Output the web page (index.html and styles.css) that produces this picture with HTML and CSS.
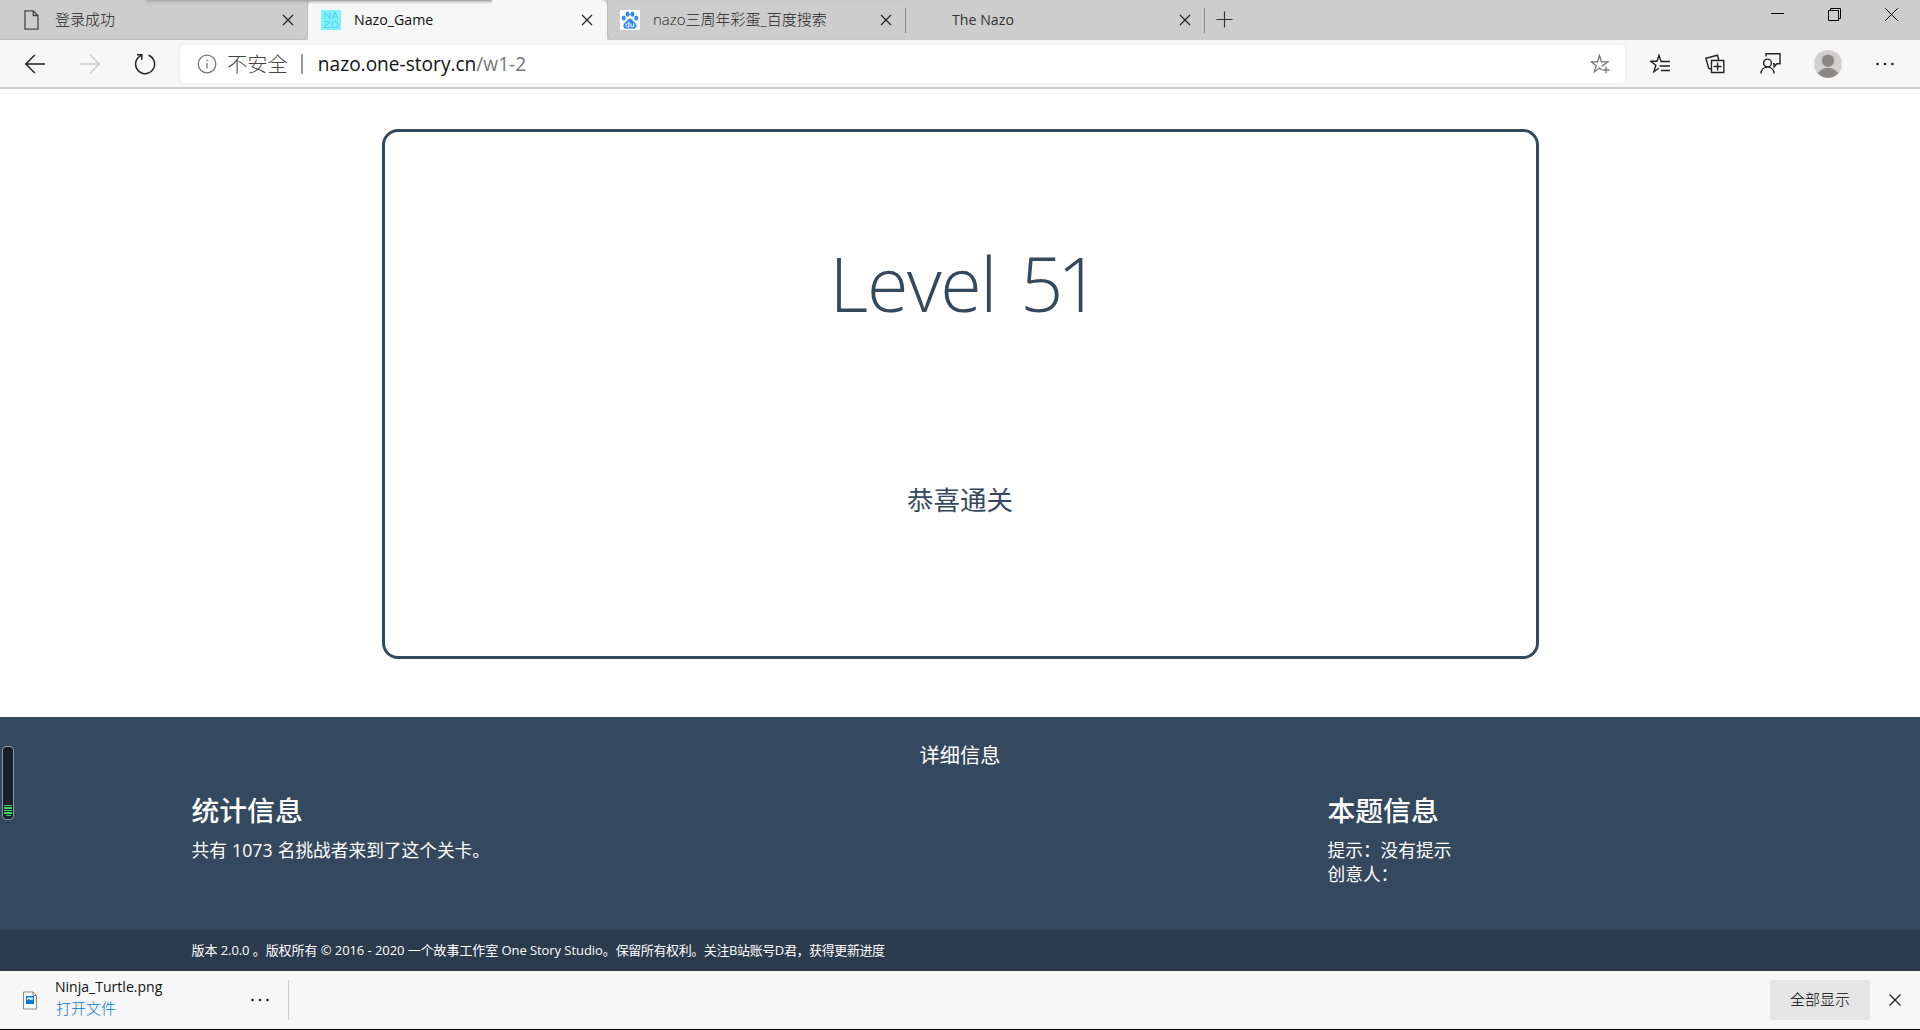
FILE: index.html
```html
<!DOCTYPE html>
<html lang="zh-CN">
<head>
<meta charset="utf-8">
<title>Nazo_Game</title>
<link rel="stylesheet" href="styles.css">
</head>
<body>
<div class="window">
  <header class="tabstrip">
    <div class="tab tab-first">
      <svg class="favicon" viewBox="0 0 20 20"><path d="M3 .8h8.300L16 5.500V19.200H3zM11.300 .8v4.700H16" fill="none" stroke="#444" stroke-width="1.300"/></svg>
      <span class="tab-title">登录成功</span>
      <svg class="close" viewBox="0 0 12 12"><path d="M1 1l10 10M11 1L1 11"/></svg>
    </div>
    <div class="tab tab-active">
      <svg class="favicon" viewBox="0 0 20 20"><path fill="#7ff3fb" d="M0 0h20v20H0z"/><path d="M3.500 9V2.500l5.500 6V2.500M11 9l3-6.500 3 6.500M12 7h4M3 11.500h6L3 17.500h6.500" fill="none" stroke="#5ed3f0" stroke-width="1.200"/><circle cx="14" cy="14.500" r="3" fill="none" stroke="#5ed3f0" stroke-width="1.200"/></svg>
      <span class="tab-title latin-title">Nazo_Game</span>
      <svg class="close" viewBox="0 0 12 12"><path d="M1 1l10 10M11 1L1 11"/></svg>
    </div>
    <div class="tab tab-search">
      <svg class="favicon" viewBox="0 0 20 20"><path fill="#fff" d="M0 0h20v20H0z"/><g fill="#3388ff"><ellipse cx="3.700" cy="8" rx="2" ry="2.600"/><ellipse cx="7.600" cy="4.200" rx="2" ry="2.700"/><ellipse cx="12.400" cy="4.200" rx="2" ry="2.700"/><ellipse cx="16.300" cy="8" rx="2" ry="2.600"/><path d="M10 8.500c2 0 3 2.500 4.800 4 3.200 2.800 1.700 6.300-1.300 6.300-1.500 0-2-.3-3.500-.3s-2 .3-3.500.3c-3 0-4.500-3.500-1.300-6.300C7 11 8 8.500 10 8.500z"/></g><path d="M9 11.500v5.500H7.400a1.500 1.500 0 0 1 0-3.200H9M11 13.600v2.300c0 1.500 2.600 1.500 2.600 0v-2.300V17" fill="none" stroke="#fff" stroke-width="1"/></svg>
      <span class="tab-title">nazo三周年彩蛋_百度搜索</span>
      <svg class="close" viewBox="0 0 12 12"><path d="M1 1l10 10M11 1L1 11"/></svg>
    </div>
    <div class="tab tab-last">
      <span class="tab-title latin-title">The Nazo</span>
      <svg class="close" viewBox="0 0 12 12"><path d="M1 1l10 10M11 1L1 11"/></svg>
    </div>
    <svg class="new-tab" viewBox="0 0 18 18"><path d="M9 .5v17M.5 9h17"/></svg>
    <div class="window-buttons">
      <svg width="13" height="13" viewBox="0 0 13 13"><path d="M0 5.500h13"/></svg>
      <svg width="13" height="13" viewBox="0 0 13 13"><path d="M.5 2.500h10v10H.5zM2.500 2.500v-2h10v10h-2"/></svg>
      <svg width="13" height="13" viewBox="0 0 13 13"><path d="M.3 .3l12.400 12.400M12.700 .3L.3 12.700"/></svg>
    </div>
    <div class="top-shadow"></div>
  </header>

  <nav class="toolbar">
    <svg class="nav-icon back" viewBox="0 0 20 20"><path d="M20 10H.8M9.800 1L.8 10l9 9"/></svg>
    <svg class="nav-icon forward" viewBox="0 0 20 20"><path d="M0 10h19.200M10.200 1l9 9-9 9"/></svg>
    <svg class="nav-icon reload" viewBox="0 0 22 22"><path d="M14.500 2.300A9.500 9.500 0 1 1 7 2.600M3 1.800h4.800v5"/></svg>
    <div class="address">
      <svg class="info" viewBox="0 0 20 20"><circle cx="10" cy="10" r="8.800"/><path d="M10 9v5.500M10 5.500v1.700"/></svg>
      <span class="insecure">不安全</span>
      <span class="divider"></span>
      <span class="url">nazo.one-story.cn<span class="path">/w1-2</span></span>
      <svg class="star" viewBox="0 0 20 20"><path d="M12.500 12.500l-.3-.5 5.800-4.200h-6.500L9.500 1.500l-2 6.300H1l5.300 3.900-2 6.200 5.200-3.800 2.200 1.600M16 12.500v7M12.500 16h7"/></svg>
    </div>
    <div class="actions">
      <svg width="20" height="20" viewBox="0 0 20 20"><path d="M11.500 7.500H11L9 1.300 7 7.300H.9l4.900 3.900-1.900 6.500 4.800-3.400M11 7.500h9M9.500 12h10.500M11 16.500h9"/></svg>
      <svg width="20" height="20" viewBox="0 0 20 20"><path d="M6.500 6.500h12.300v12H6.500zM12.600 8.500v8M8.600 12.500h8M6.300 15.200l-2.500-.8L.8 4.200l11.700-3 1.200 5"/></svg>
      <svg width="21" height="21" viewBox="0 0 21 21"><circle cx="7.500" cy="10" r="3.900"/><path d="M1 20.500c0-8.500 13-8.500 13 0M6 3.500V.8h14v10h-3.200l-2.600 3v-3H13"/></svg>
      <svg class="avatar" width="28" height="28" viewBox="0 0 28 28"><circle cx="14" cy="14" r="14" fill="#d2d0ce"/><circle cx="14" cy="10.700" r="6.200" fill="#8a8886"/><path d="M4 23.500c3-7.500 17-7.500 20 0a14 14 0 0 1-20 0z" fill="#8a8886"/></svg>
      <svg class="dots" width="18" height="4" viewBox="0 0 18 4"><circle cx="1.600" cy="2" r="1.300"/><circle cx="9" cy="2" r="1.300"/><circle cx="16.400" cy="2" r="1.300"/></svg>
    </div>
  </nav>

  <main class="stage">
    <section class="level-card">
      <h1>Level <span class="level-number">51</span></h1>
      <p>恭喜通关</p>
    </section>
  </main>

  <footer class="details">
    <h2>详细信息</h2>
    <div class="columns">
      <section class="stats">
        <h3>统计信息</h3>
        <p>共有 <span class="count">1073</span> 名挑战者来到了这个关卡。</p>
      </section>
      <section class="question">
        <h3>本题信息</h3>
        <p>提示：没有提示</p>
        <p>创意人：</p>
      </section>
    </div>
    <div class="meter"><i></i><i></i><i></i><i></i><i></i></div>
  </footer>
  <div class="copyright"><span class="version">版本 2.0.0 。版权所有 © 2016 - 2020 一个故事工作室 One Story Studio。</span><span class="rights">保留所有权利。关注B站账号D君，获得更新进度</span></div>

  <div class="downloads">
    <svg class="file" width="16" height="19" viewBox="0 0 16 19"><path d="M1.500 1h9.500l3.500 3.500V18h-13z" fill="#fff" stroke="#8a8886"/><path d="M11 1v3.500h3.500" fill="none" stroke="#8a8886"/><path d="M4 5h8v8H4z" fill="#0078d4"/><path d="M5.200 6.500h5.600v3.200l-1-1.400-1 1-1.800-1.500-1.800 1.400z" fill="#fff"/></svg>
    <div class="file-text">
      <span class="file-name">Ninja_Turtle.png</span>
      <span class="open-file">打开文件</span>
    </div>
    <svg class="dots" width="18" height="4" viewBox="0 0 18 4"><circle cx="1.600" cy="2" r="1.300"/><circle cx="9" cy="2" r="1.300"/><circle cx="16.400" cy="2" r="1.300"/></svg>
    <span class="bar-line"></span>
    <span class="show-all">全部显示</span>
    <svg class="close" viewBox="0 0 12 12"><path d="M.5 .5l11 11M11.500 .5L.5 11.500"/></svg>
  </div>
</div>
</body>
</html>
```
FILE: styles.css
```css
* { box-sizing: border-box; }
body { margin: 0; font-family: "Open Sans", "Noto Sans CJK SC", sans-serif; color: #222; overflow: hidden; }
h1, h2, h3, p { margin: 0; font-weight: 400; }
svg { display: block; flex: none; }
.window { display: flex; flex-direction: column; width: 1920px; height: 1030px; background: #fff; border-bottom: 1px solid #000; }

.tabstrip { position: relative; display: flex; height: 40px; background: #cdcdcd; }
.tab { display: flex; align-items: center; width: 299px; height: 40px; padding: 0 14px 0 13px; font-size: 15px; color: #222; white-space: nowrap; }
.tab-first { width: 308px; padding-left: 22px; border-radius: 0 0 6px 0; box-shadow: inset -1px -1px 1px #bbb; }
.tab-active { background: #f7f7f7; border-radius: 6px 6px 0 0; color: #111; }
.tab-search { border-radius: 0 0 0 6px; box-shadow: inset 1px 0 1px #bbb; }
.tab-search::after, .tab-last::after { content: ""; align-self: center; width: 1px; height: 25px; margin: 0 -14px 0 13px; background: #888; }
.tab-last { padding-left: 46px; }
.favicon { width: 20px; height: 20px; margin-right: 13px; }
.tab-title { flex: 1; padding-bottom: 2px; line-height: 20px; font-weight: 300; }
.tab-title.latin-title { padding-bottom: 0; font-weight: 400; font-size: 14.200px; }
.tab-last .latin-title { color: #333; }
.close { width: 12px; height: 12px; fill: none; stroke: #222; stroke-width: 1.200; }
.new-tab { width: 17px; height: 17px; margin: 11px 0 0 11px; fill: none; stroke: #333; stroke-width: 1.200; }
.window-buttons { display: flex; gap: 44px; margin: 8px 22px 0 auto; fill: none; stroke: #000; stroke-width: 1; }
.top-shadow { position: absolute; left: 147px; top: 0; width: 344px; height: 1px; background: #aaa; box-shadow: 0 0 3px 1px #aaa; }

.toolbar { display: flex; align-items: center; height: 49px; padding-left: 25px; background: #f7f7f7; border-bottom: 2px solid #cecece; }
.nav-icon { width: 20px; height: 20px; fill: none; stroke: #222; stroke-width: 1.500; }
.forward { margin-left: 35px; stroke: #ccc; }
.reload { width: 22px; height: 22px; margin-left: 34px; }
.address { display: flex; align-items: center; width: 1445px; height: 38px; margin-left: 24px; padding: 0 15px 0 17px; background: #fff; border-radius: 5px; box-shadow: 0 0 3px #e4e4e4; font-size: 19.100px; line-height: 36px; }
.info { width: 20px; height: 20px; fill: none; stroke: #777; stroke-width: 1.300; }
.insecure { margin-left: 10px; font-size: 20.300px; font-weight: 300; color: #444; }
.divider { width: 2px; height: 20px; margin: 0 15px 0 13px; background: #999; }
.url { flex: 1; color: #111; }
.path { color: #777; }
.star { width: 20px; height: 20px; fill: none; stroke: #777; stroke-width: 1.300; }
.actions { display: flex; align-items: center; margin-left: 25px; fill: none; stroke: #222; stroke-width: 1.400; }
.actions svg + svg { margin-left: 35px; }
.actions svg + .avatar { margin-left: 33px; stroke: none; }
.actions svg + .dots { margin-left: 34px; }
.dots { fill: #222; stroke: none; }

.stage { display: flex; justify-content: center; height: 628px; padding-top: 40px; background: #fff; }
.level-card { display: flex; flex-direction: column; align-items: center; width: 1157px; height: 530px; border: 3px solid #34495e; border-radius: 16px; color: #34495e; }
.level-card h1 { margin-top: 95px; padding-left: 4px; font-size: 75.500px; line-height: 112px; font-weight: 300; letter-spacing: -1.400px; word-spacing: 6px; }
.level-number { letter-spacing: -6px; }
.level-card p { margin-top: 141px; font-size: 26.500px; line-height: 40px; }

.details { position: relative; height: 213px; background: #34495e; color: #fff; }
.details h2 { padding-top: 23px; font-size: 20.200px; line-height: 30px; text-align: center; }
.columns { display: grid; grid-template-columns: 1136px 1fr; padding: 18px 0 0 191.500px; }
.columns h3 { font-size: 27.800px; line-height: 44px; font-weight: 500; }
.columns p { font-size: 17.700px; line-height: 24px; word-spacing: .6px; }
.columns h3 + p { margin-top: 6px; }
.meter { position: absolute; left: 2px; top: 29px; display: flex; flex-direction: column; justify-content: flex-end; align-items: center; gap: 1px; width: 12px; height: 74px; padding-bottom: 3px; background: #17202a; border: 1px solid #8f9ba8; border-radius: 4px; }
.meter i { width: 8px; height: 1px; background: #40d860; }
.meter i:nth-child(2), .meter i:nth-child(4) { height: 2px; }
.meter i:last-child { width: 5px; }
.copyright { height: 41px; padding-left: 191.500px; background: #2c3a4e; color: #fff; font-size: 13px; line-height: 41px; white-space: nowrap; }
.version { letter-spacing: -.070px; }
.rights { letter-spacing: -.400px; }

.downloads { display: flex; align-items: center; height: 58px; padding: 0 19px 0 22px; background: #f7f7f7; }
.file-text { display: flex; flex-direction: column; width: 196px; margin-left: 17px; padding-bottom: 5px; font-size: 14.050px; line-height: 22px; color: #111; }
.open-file { padding-left: 1px; font-size: 15px; font-weight: 300; line-height: 21px; color: #0078d4; }
.bar-line { width: 1px; height: 40px; margin-left: 19px; background: #ccc; }
.show-all { width: 100px; height: 40px; margin: 0 19px 0 auto; background: #e5e5e5; border-radius: 2px; font-size: 15px; font-weight: 300; line-height: 38px; text-align: center; color: #000; }
```
